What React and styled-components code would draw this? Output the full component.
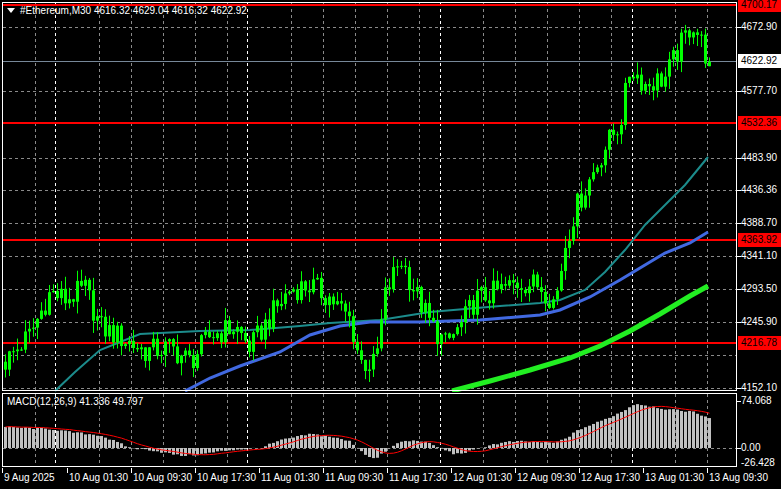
import React from "react";
import styled, { createGlobalStyle } from "styled-components";

const Global = createGlobalStyle`
  html, body { margin: 0; padding: 0; background: #000; overflow: hidden; }
  body { font-family: "Liberation Sans", Arial, sans-serif; }
`;

const Chart = styled.div`
  display: grid;
  grid-template-columns: 737px 44px;
  grid-template-rows: 392px 76px 21px;
  width: 781px;
  height: 489px;
  background: #000;
  color: #fff;
`;
const Pane = styled.svg`display: block;`;
const Axis = styled.div`position: relative; overflow: visible;`;
const PriceTag = styled.div`
  position: absolute;
  left: 1px;
  top: ${(p) => p.$y - 7}px;
  height: 14px;
  width: 43px;
  line-height: 14px;
  font-size: 10px;
  padding-left: 3px;
  box-sizing: border-box;
  background: ${(p) => p.$bg || "transparent"};
  color: ${(p) => p.$fg || "#fff"};
  white-space: nowrap;
`;
const Tick = styled.div`
  position: absolute; left: 0; top: ${(p) => p.$y}px;
  width: 4px; height: 1px; background: #fff;
`;
const TimeAxis = styled.div`
  grid-column: 1 / 3;
  position: relative;
  font-size: 10px;
`;
const TimeLabel = styled.div`
  position: absolute; top: 4px; left: ${(p) => p.$x}px; white-space: nowrap;
`;
const TimeTick = styled.div`
  position: absolute; top: 0; left: ${(p) => p.$x}px; width: 1px; height: 5px; background: #fff;
`;
const Legend = styled.text`font-size: 10px; fill: #fff; font-family: "Liberation Sans", Arial, sans-serif;`;

const yP = (p) => 27 + (4672.9 - p) / 1.4427;

const pricePath = [[5,4190],[30,4230],[50,4290],[65,4280],[85,4295],[100,4240],[120,4225],[145,4205],[170,4210],[190,4190],[210,4228],[235,4240],[250,4210],[270,4255],[290,4295],[310,4300],[330,4282],[350,4250],[360,4190],[375,4185],[385,4285],[400,4340],[415,4290],[430,4245],[445,4215],[460,4240],[475,4280],[495,4290],[520,4305],[540,4300],[555,4275],[565,4360],[575,4410],[590,4455],[605,4500],[620,4535],[630,4615],[645,4590],[665,4600],[680,4645],[692,4680],[700,4655],[708,4622]];
const macdPath = [[5,33],[50,30],[70,25],[100,20],[130,0],[150,-3],[180,-12],[200,-10],[230,-3],[260,0],[280,12],[310,22],[330,18],[350,10],[365,-10],[375,-18],[385,-5],[400,10],[420,12],[440,0],[455,-10],[470,-5],[490,5],[510,10],[530,10],[555,8],[565,15],[580,30],[600,42],[620,56],[635,70],[650,66],[670,60],[690,58],[708,48]];
const interp = (pts, x) => {
  for (let i = 0; i < pts.length - 1; i++) {
    const [x0, y0] = pts[i], [x1, y1] = pts[i + 1];
    if (x >= x0 && x <= x1) return y0 + ((y1 - y0) * (x - x0)) / (x1 - x0);
  }
  return pts[pts.length - 1][1];
};
const rnd = (i) => { const s = Math.sin(i * 12.9898 + 78.233) * 43758.5453; return s - Math.floor(s); };

const xs = [];
for (let x = 5; x <= 709; x += 4) xs.push(x);
let prev = 4190;
const candles = xs.map((x, i) => {
  const c = interp(pricePath, x) + (rnd(i) - 0.5) * 36;
  const o = prev; prev = c;
  const h = Math.max(o, c) + rnd(i + 100) * 18;
  const l = Math.min(o, c) - rnd(i + 200) * 18;
  return { x, o, c, h, l };
});
candles[candles.length - 1] = { x: 709, o: 4616.32, c: 4622.92, h: 4629.04, l: 4616.32 };

const hist = xs.map((x, i) => interp(macdPath, x) + (rnd(i + 300) - 0.5) * 3);
const sig = hist.map((_, i) => {
  const a = hist.slice(Math.max(0, i - 8), i + 1);
  return a.reduce((s, v) => s + v, 0) / a.length;
});
const yM = (v) => 448 - v * 0.635;

const line = (pts) => pts.map((p, i) => `${i ? "L" : "M"}${p[0]},${p[1]}`).join(" ");
const teal = [[55,391],[75,372],[100,350],[140,334],[200,331],[250,330],[300,326],[330,323],[380,320],[430,312],[500,306],[540,303],[560,300],[585,290],[605,272],[625,250],[645,225],[665,205],[685,185],[708,157]];
const blue = [[185,391],[210,378],[240,366],[280,352],[310,335],[340,326],[370,322],[420,322],[480,320],[540,315],[560,310],[590,297],[620,280],[645,265],[665,253],[690,243],[708,232]];
const green = [[452,391],[490,381],[530,370],[570,358],[600,346],[630,331],[660,314],[690,296],[708,286]];

const vgrid = [35,99,131,163,195,227,291,323,355,387,419,483,515,547,579,611,675,707];
const vday = [55,247,440,632];
const hgrid = [27,91,158,190,223,256,289,322,355,388];
const hLabels = [["4672.90",27],["4577.70",91],["4483.90",158],["4436.36",190],["4388.70",223],["4341.10",256],["4293.50",289],["4245.90",322],["4152.10",388]];
const redLevels = [["4700.17",5],["4532.36",123],["4363.92",240],["4216.78",343]];
const times = [["9 Aug 2025",2],["10 Aug 01:30",67],["10 Aug 09:30",131],["10 Aug 17:30",195],["11 Aug 01:30",259],["11 Aug 09:30",323],["11 Aug 17:30",387],["12 Aug 01:30",451],["12 Aug 09:30",515],["12 Aug 17:30",579],["13 Aug 01:30",643],["13 Aug 09:30",707]];

const Grid = ({ top, bottom }) => (
  <g strokeDasharray="3,3" strokeWidth="1">
    {vgrid.map((x) => <line key={x} x1={x + 0.5} x2={x + 0.5} y1={top} y2={bottom} stroke="#8a8a8a" />)}
    {vday.map((x) => <line key={x} x1={x + 0.5} x2={x + 0.5} y1={top} y2={bottom} stroke="#fff" />)}
  </g>
);

export default function App() {
  return (
    <Chart>
      <Global />
      <Pane width="737" height="392" viewBox="0 0 737 392">
        <Grid top={3} bottom={390} />
        <g stroke="#8a8a8a" strokeDasharray="3,3">
          {hgrid.map((y) => <line key={y} x1={3} x2={736} y1={y + 0.5} y2={y + 0.5} />)}
        </g>
        <line x1={3} x2={736} y1={61.5} y2={61.5} stroke="#778899" />
        {redLevels.map(([t, y]) => <line key={t} x1={3} x2={736} y1={y} y2={y} stroke="#ff0000" strokeWidth="2" />)}
        <path d={line(teal)} fill="none" stroke="#1c8c8c" strokeWidth="2" />
        <path d={line(blue)} fill="none" stroke="#4169e1" strokeWidth="3" />
        <path d={line(green)} fill="none" stroke="#22ee22" strokeWidth="5" />
        <g fill="#00ff00">
          {candles.map((k) => (
            <g key={k.x}>
              <line x1={k.x + 0.5} x2={k.x + 0.5} y1={yP(k.h)} y2={yP(k.l)} stroke="#00ff00" strokeWidth="1" />
              <rect x={k.x - 1} y={Math.min(yP(k.o), yP(k.c))} width="3" height={Math.max(1, Math.abs(yP(k.o) - yP(k.c)))} />
            </g>
          ))}
        </g>
        <path d="M7,8 L15,8 L11,13 Z" fill="#fff" />
        <Legend x="20" y="14">#Ethereum,M30  4616.32 4629.04 4616.32 4622.92</Legend>
        <rect x="2.5" y="2.5" width="734" height="388" fill="none" stroke="#fff" />
      </Pane>
      <Axis>
        {hLabels.map(([t, y]) => (<React.Fragment key={t}><Tick $y={y} /><PriceTag $y={y}>{t}</PriceTag></React.Fragment>))}
        {redLevels.map(([t, y]) => <PriceTag key={t} $y={y} $bg="#ff0000" $fg="#000">{t}</PriceTag>)}
        <PriceTag $y={61} $bg="#fff" $fg="#000">4622.92</PriceTag>
      </Axis>
      <Pane width="737" height="76" viewBox="0 392 737 76">
        <Grid top={394} bottom={466} />
        <line x1={3} x2={736} y1={448.5} y2={448.5} stroke="#8a8a8a" strokeDasharray="3,3" />
        <g fill="#c0c0c0">
          {hist.map((v, i) => (
            <rect key={i} x={xs[i] - 1} y={Math.min(yM(v), 448)} width="3" height={Math.abs(yM(v) - 448) || 1} />
          ))}
        </g>
        <path d={line(sig.map((v, i) => [xs[i] + 0.5, yM(v)]))} fill="none" stroke="#ff0000" strokeWidth="1" />
        <Legend x="7" y="405">MACD(12,26,9) 41.336 49.797</Legend>
        <rect x="2.5" y="393.5" width="734" height="73" fill="none" stroke="#fff" />
      </Pane>
      <Axis>
        <Tick $y={9} /><PriceTag $y={9}>74.068</PriceTag>
        <Tick $y={56} /><PriceTag $y={56}>0.00</PriceTag>
        <PriceTag $y={71}>-26.428</PriceTag>
      </Axis>
      <TimeAxis>
        {times.map(([t, x]) => (<React.Fragment key={t}><TimeTick $x={x} /><TimeLabel $x={x + 2}>{t}</TimeLabel></React.Fragment>))}
      </TimeAxis>
    </Chart>
  );
}
